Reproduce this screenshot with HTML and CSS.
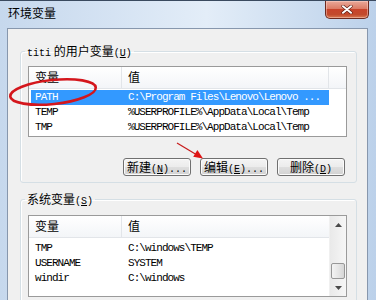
FILE: index.html
```html
<!DOCTYPE html>
<html lang="zh-CN">
<head>
<meta charset="utf-8">
<title>环境变量</title>
<link rel="stylesheet" href="styles.css">
</head>
<body>
<div class="window">
  <div class="titlebar">
    <span class="title">环境变量</span>
    <div class="close">
      <svg width="12" height="9" viewBox="0 0 12 9"><path d="M2 1.2 L10 7.8 M10 1.2 L2 7.8" stroke="#5a1b12" stroke-width="3.2" stroke-linecap="round"/><path d="M2 1.2 L10 7.8 M10 1.2 L2 7.8" stroke="#fff" stroke-width="2" stroke-linecap="round"/></svg>
    </div>
  </div>
  <div class="client">
    <fieldset class="group">
      <legend><span class="a">titi</span> 的用户变量<span class="a">(<u>U</u>)</span></legend>
      <div class="list list-user">
        <div class="head"><div class="c1">变量</div><div class="c2">值</div><div class="c3"></div></div>
        <div class="rows">
          <div class="row sel"><div class="c1">PATH</div><div class="c2">C:\Program Files\Lenovo\Lenovo ...</div></div>
          <div class="row"><div class="c1">TEMP</div><div class="c2">%USERPROFILE%\AppData\Local\Temp</div></div>
          <div class="row"><div class="c1">TMP</div><div class="c2">%USERPROFILE%\AppData\Local\Temp</div></div>
        </div>
      </div>
      <div class="buttons">
        <div class="btn">新建<span class="a">(<u>N</u>)...</span></div>
        <div class="btn">编辑<span class="a">(<u>E</u>)...</span></div>
        <div class="btn">删除<span class="a">(<u>D</u>)</span></div>
      </div>
    </fieldset>
    <fieldset class="group group-sys">
      <legend>系统变量<span class="a">(<u>S</u>)</span></legend>
      <div class="list list-sys">
        <div class="main">
          <div class="head"><div class="c1">变量</div><div class="c2 c2-sys">值</div></div>
          <div class="rows rows-sys">
            <div class="row"><div class="c1">TMP</div><div class="c2">C:\windows\TEMP</div></div>
            <div class="row"><div class="c1">USERNAME</div><div class="c2">SYSTEM</div></div>
            <div class="row"><div class="c1">windir</div><div class="c2">C:\windows</div></div>
          </div>
        </div>
        <div class="scrollbar">
          <div class="sb-btn"><svg width="7" height="4" viewBox="0 0 7 4"><path d="M0 4 L3.5 0 L7 4 Z" fill="#4a4a4a"/></svg></div>
          <div class="sb-track"></div>
          <div class="sb-thumb"></div>
          <div class="sb-btn"><svg width="7" height="4" viewBox="0 0 7 4"><path d="M0 0 L3.5 4 L7 0 Z" fill="#4a4a4a"/></svg></div>
        </div>
      </div>
    </fieldset>
  </div>
  <svg class="annot" width="376" height="300" viewBox="0 0 376 300">
    <ellipse cx="53" cy="92" rx="43" ry="12" transform="rotate(-6 53 92)" fill="none" stroke="#d4161c" stroke-width="2.6"/>
    <line x1="177" y1="143" x2="197" y2="155" stroke="#c81a1a" stroke-width="1.2"/>
    <path d="M203 158.5 L193.2 156.7 L197.4 149.9 Z" fill="#e01515"/>
  </svg>
</div>
</body>
</html>
```

FILE: styles.css
```css
body {
  margin: 0;
  width: 376px;
  height: 300px;
  overflow: hidden;
}

.window {
  position: relative;
  width: 376px;
  height: 300px;
  display: flex;
  flex-direction: column;
  background: linear-gradient(to right, #c6d8ed 0%, #d5e3f3 30%, #e3edf8 55%, #cfdff1 78%, #bcd1ea 100%);
  font-family: "Noto Sans CJK SC", sans-serif;
  font-size: 12px;
  color: #000;
  overflow: hidden;
}

.titlebar {
  height: 28px;
  flex-shrink: 0;
  display: flex;
  align-items: flex-start;
  border-top: 1px solid #3a4a5f;
  box-sizing: border-box;
}

.title {
  padding: 4px 0 0 8px;
  line-height: 16px;
  font-size: 12px;
  color: #000;
}

.close {
  margin-left: auto;
  margin-right: 7px;
  width: 44px;
  height: 18px;
  box-sizing: border-box;
  border: 1px solid #6d2a1f;
  border-top: none;
  border-radius: 0 0 5px 5px;
  background: linear-gradient(#eaa99a 0%, #dc7c66 45%, #c8432a 50%, #c24a2c 80%, #d97a52 100%);
  box-shadow: inset 0 0 0 1px rgba(255, 220, 210, 0.45);
  display: flex;
  align-items: center;
  justify-content: center;
}

.client {
  flex: 1;
  min-height: 0;
  margin: 0 8px 0 7px;
  background: #f0f0f0;
  border: 1px solid #8797ad;
  border-bottom: none;
  padding: 15px 10px 0 12px;
  overflow: hidden;
}

.a {
  font-family: "Liberation Mono", monospace;
  font-size: 10px;
  line-height: 1;
}

.group {
  margin: 0;
  padding: 8px 9px 6px 7px;
  border: 1px solid #d5dfe5;
  border-radius: 3px;
  min-width: 0;
  box-shadow: inset 1px 1px 0 #fff;
}

.group legend {
  padding: 0 2px;
  margin-left: -3px;
  height: 14px;
  line-height: 14px;
  font-size: 12px;
}

.group-sys {
  margin-top: 9px;
  padding-top: 9px;
}

.list {
  background: #fff;
  border: 1px solid #9a9a9a;
  box-sizing: border-box;
  overflow: hidden;
}

.list-user {
  height: 71px;
}

.list-sys {
  height: 82px;
  display: flex;
}

.list-sys .main {
  flex: 1;
  min-width: 0;
}

.head {
  display: flex;
  height: 22px;
  box-sizing: border-box;
  background: linear-gradient(#ffffff, #f3f5f8);
  border-bottom: 1px solid #e2e5e9;
}

.head > div {
  line-height: 20px;
  padding-left: 6px;
  box-sizing: border-box;
  border-right: 1px solid #e2e5e9;
}

.head .c1 {
  width: 93px;
}

.head .c2 {
  width: 207px;
}

.head .c2-sys {
  flex: 1;
  border-right: none;
}

.head .c3 {
  flex: 1;
  border-right: none;
}

.rows {
  padding-top: 1px;
}

.rows-sys {
  padding-top: 3px;
}

.row {
  display: flex;
  width: 298px;
  height: 15px;
  margin-left: 2px;
  line-height: 15px;
  font-family: "Liberation Mono", monospace;
  font-size: 11px;
  letter-spacing: -0.95px;
  white-space: nowrap;
}

.row .c1 {
  width: 91px;
  padding-left: 4px;
  box-sizing: border-box;
  flex-shrink: 0;
}

.row .c2 {
  flex: 1;
  padding-left: 6px;
  overflow: hidden;
}

.row.sel {
  background: #3399ff;
  color: #fff;
}

.buttons {
  display: flex;
  justify-content: flex-end;
  gap: 9px;
  margin-top: 21px;
  padding-right: 2px;
}

.btn {
  width: 68px;
  height: 18px;
  box-sizing: border-box;
  border: 1px solid #707070;
  border-radius: 3px;
  background: linear-gradient(#f4f4f4 0%, #ececec 48%, #dedede 52%, #d2d2d2 100%);
  box-shadow: inset 0 0 0 1px #fbfbfb;
  font-size: 12px;
  line-height: 15px;
  text-align: center;
  white-space: nowrap;
}

.scrollbar {
  width: 17px;
  flex-shrink: 0;
  display: flex;
  flex-direction: column;
  background: linear-gradient(to right, #e9e9e9, #f6f6f6);
  border-left: 1px solid #f0f0f0;
  box-sizing: border-box;
}

.sb-btn {
  height: 17px;
  display: flex;
  align-items: center;
  justify-content: center;
}

.sb-track {
  flex: 1;
}

.sb-thumb {
  height: 16px;
  margin: 0 1px;
  box-sizing: border-box;
  border: 1px solid #979797;
  border-radius: 2px;
  background: linear-gradient(to right, #f3f3f3, #e6e6e6 50%, #d6d6d6);
}

.annot {
  position: absolute;
  left: 0;
  top: 0;
  pointer-events: none;
}
```
